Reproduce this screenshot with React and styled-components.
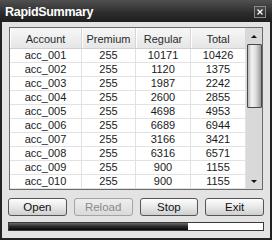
import React from 'react';
import styled, { createGlobalStyle } from 'styled-components';

const rows = [
  ['acc_001', 255, 10171, 10426],
  ['acc_002', 255, 1120, 1375],
  ['acc_003', 255, 1987, 2242],
  ['acc_004', 255, 2600, 2855],
  ['acc_005', 255, 4698, 4953],
  ['acc_006', 255, 6689, 6944],
  ['acc_007', 255, 3166, 3421],
  ['acc_008', 255, 6316, 6571],
  ['acc_009', 255, 900, 1155],
  ['acc_010', 255, 900, 1155],
];

const columns = ['Account', 'Premium', 'Regular', 'Total'];
const progress = 70.6;

function App() {
  return (
    <>
      <Global />
      <Window>
        <TitleBar>
          <Title>RapidSummary</Title>
          <CloseButton>
            <svg width="6" height="6" viewBox="0 0 6 6">
              <path d="M0.5 0.5 L5.5 5.5 M5.5 0.5 L0.5 5.5" stroke="#fff" strokeWidth="1.2" />
            </svg>
          </CloseButton>
        </TitleBar>
        <Body>
          <ListBox>
            <Table>
              <HeaderRow>
                {columns.map(c => <HeaderCell key={c}>{c}</HeaderCell>)}
              </HeaderRow>
              {rows.map(r => (
                <Row key={r[0]}>
                  {r.map((v, i) => <Cell key={i}>{v}</Cell>)}
                </Row>
              ))}
            </Table>
            <ScrollBar>
              <ArrowBox><Arrow up /></ArrowBox>
              <Thumb />
              <Track />
              <ArrowBox><Arrow /></ArrowBox>
            </ScrollBar>
          </ListBox>
          <Buttons>
            <Button>Open</Button>
            <Button disabled>Reload</Button>
            <Button>Stop</Button>
            <Button>Exit</Button>
          </Buttons>
          <Progress>
            <Fill style={{ width: `${progress}%` }} />
          </Progress>
        </Body>
      </Window>
    </>
  );
}

export default App;

const Global = createGlobalStyle`
  html, body { margin: 0; padding: 0; background: #fff; }
  body { font-family: "Liberation Sans", Arial, sans-serif; }
`;

const Window = styled.div`
  width: 272px;
  height: 240px;
  box-sizing: border-box;
  background: #e3e3e3;
  border: 2px solid #222;
  border-top: none;
  display: flex;
  flex-direction: column;
`;

const TitleBar = styled.div`
  height: 22px;
  margin: 0 -2px;
  padding: 0 6px 0 5px;
  display: flex;
  align-items: center;
  justify-content: space-between;
  background: linear-gradient(#505050, #2c2c2c 60%, #1e1e1e);
`;

const Title = styled.div`
  color: #fff;
  font-weight: bold;
  font-size: 12.5px;
  letter-spacing: -0.3px;
  margin-top: 2px;
`;

const CloseButton = styled.div`
  width: 10px;
  height: 10px;
  border: 1px solid #8a8a8a;
  background: linear-gradient(#4a4a4a, #2a2a2a);
  display: flex;
  align-items: center;
  justify-content: center;
  margin-top: 2px;
`;

const Body = styled.div`
  flex: 1;
  padding: 5px 7px 0;
  display: flex;
  flex-direction: column;
`;

const ListBox = styled.div`
  height: 163px;
  box-sizing: border-box;
  border: 1px solid #6a6a6a;
  background: #fff;
  display: flex;
`;

const Table = styled.div`
  width: 236px;
  display: flex;
  flex-direction: column;
`;

const gridCols = '72px 54px 55px 55px';

const HeaderRow = styled.div`
  display: grid;
  grid-template-columns: ${gridCols};
  height: 21px;
  background: linear-gradient(#f7f7f7, #e6e6e6);
  border-bottom: 1px solid #d0d0d0;
  box-sizing: border-box;
`;

const HeaderCell = styled.div`
  font-size: 11px;
  color: #2a2a2a;
  display: flex;
  align-items: center;
  justify-content: center;
  border-right: 1px solid #d6d6d6;
  box-shadow: inset 1px 0 0 #fff;
  padding-top: 1px;
`;

const Row = styled.div`
  display: grid;
  grid-template-columns: ${gridCols};
  height: 14px;
  border-bottom: 1px solid #e2e2e2;
  box-sizing: border-box;
`;

const Cell = styled.div`
  font-size: 11px;
  line-height: 13px;
  color: #1a1a1a;
  text-align: center;
  border-right: 1px solid #e2e2e2;
`;

const ScrollBar = styled.div`
  width: 16px;
  background: #d9d9d9;
  display: flex;
  flex-direction: column;
  align-items: center;
`;

const ArrowBox = styled.div`
  height: 16px;
  width: 16px;
  display: flex;
  align-items: center;
  justify-content: center;
`;

const Arrow = styled.div`
  width: 0;
  height: 0;
  border-left: 3px solid transparent;
  border-right: 3px solid transparent;
  ${p => (p.up ? 'border-bottom: 3px solid #111;' : 'border-top: 3px solid #111;')}
`;

const Thumb = styled.div`
  width: 15px;
  height: 64px;
  box-sizing: border-box;
  border: 1px solid #4a4a4a;
  border-radius: 1px;
  background: linear-gradient(90deg, #b8b8b8, #f4f4f4 30%, #dcdcdc 60%, #9a9a9a);
`;

const Track = styled.div`
  flex: 1;
`;

const Buttons = styled.div`
  display: flex;
  gap: 7px;
  margin: 8px -1px 0;
`;

const Button = styled.div`
  flex: 1;
  height: 18px;
  box-sizing: border-box;
  border: 1px solid ${p => (p.disabled ? '#a4a4a4' : '#555')};
  border-radius: 3px;
  background: ${p => (p.disabled ? 'linear-gradient(#eeeeee, #dadada)' : 'linear-gradient(#fdfdfd, #e8e8e8 50%, #cfcfcf)')};
  color: ${p => (p.disabled ? '#8a8a8a' : '#111')};
  font-size: 11.5px;
  display: flex;
  align-items: center;
  justify-content: center;
`;

const Progress = styled.div`
  height: 9px;
  margin: 6px -1px 0;
  box-sizing: border-box;
  border: 1px solid #3a3a3a;
  background: #fff;
  display: flex;
`;

const Fill = styled.div`
  background: linear-gradient(#6a6a6a, #2a2a2a 50%, #0a0a0a);
`;
